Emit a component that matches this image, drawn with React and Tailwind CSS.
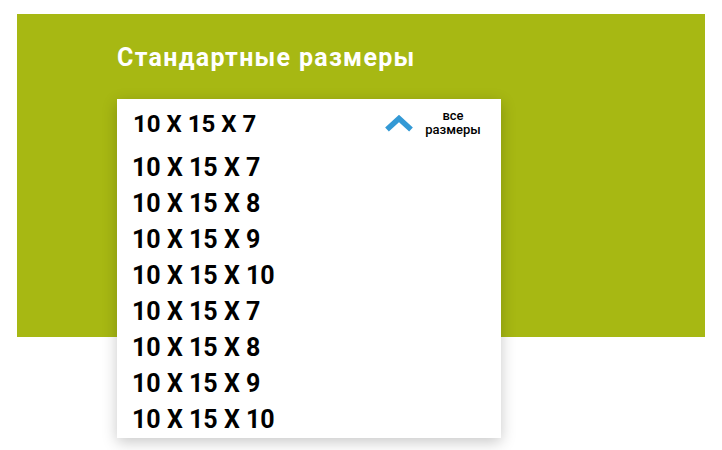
import { useState } from "react";

const sizes = [
  "10 X 15 X 7",
  "10 X 15 X 8",
  "10 X 15 X 9",
  "10 X 15 X 10",
  "10 X 15 X 7",
  "10 X 15 X 8",
  "10 X 15 X 9",
  "10 X 15 X 10",
];

function ChevronUp() {
  return (
    <svg width="28" height="17" viewBox="0 0 28 17" fill="none">
      <path d="M2 14.5 L14 3.5 L26 14.5" stroke="#3399d5" strokeWidth="5.5" strokeLinejoin="miter" />
    </svg>
  );
}

export default function App() {
  const [selected, setSelected] = useState(sizes[0]);

  return (
    <div className="min-h-[450px] bg-white pt-[14px] pl-[17px]" style={{ fontFamily: "Roboto, 'Liberation Sans', sans-serif" }}>
      <div className="h-[323px] w-[688px] bg-[#a7b813] pl-[100px] pt-[28px]">
        <h2 className="text-[25px] leading-8 font-bold tracking-[1.3px] text-white">Стандартные размеры</h2>

        <div className="mt-[25px] w-[384px] bg-white shadow-[0_4px_14px_rgba(0,0,0,0.22)]">
          <div className="flex h-[51px] items-start pl-[16px] pr-5 pt-[7px]">
            <span className="flex-1 text-[24px] leading-9 font-bold text-black">{selected}</span>
            <div className="mt-[3px] flex items-center gap-[12px]">
              <ChevronUp />
              <span className="w-[56px] text-center text-[13px] leading-[14px] font-medium text-black">
                все
                <br />
                размеры
              </span>
            </div>
          </div>
          <ul>
            {sizes.map((size, i) => (
              <li
                key={i}
                onClick={() => setSelected(size)}
                className="h-9 cursor-pointer pl-[15px] text-[25px] leading-9 font-bold text-black"
              >
                {size}
              </li>
            ))}
          </ul>
        </div>
      </div>
    </div>
  );
}
